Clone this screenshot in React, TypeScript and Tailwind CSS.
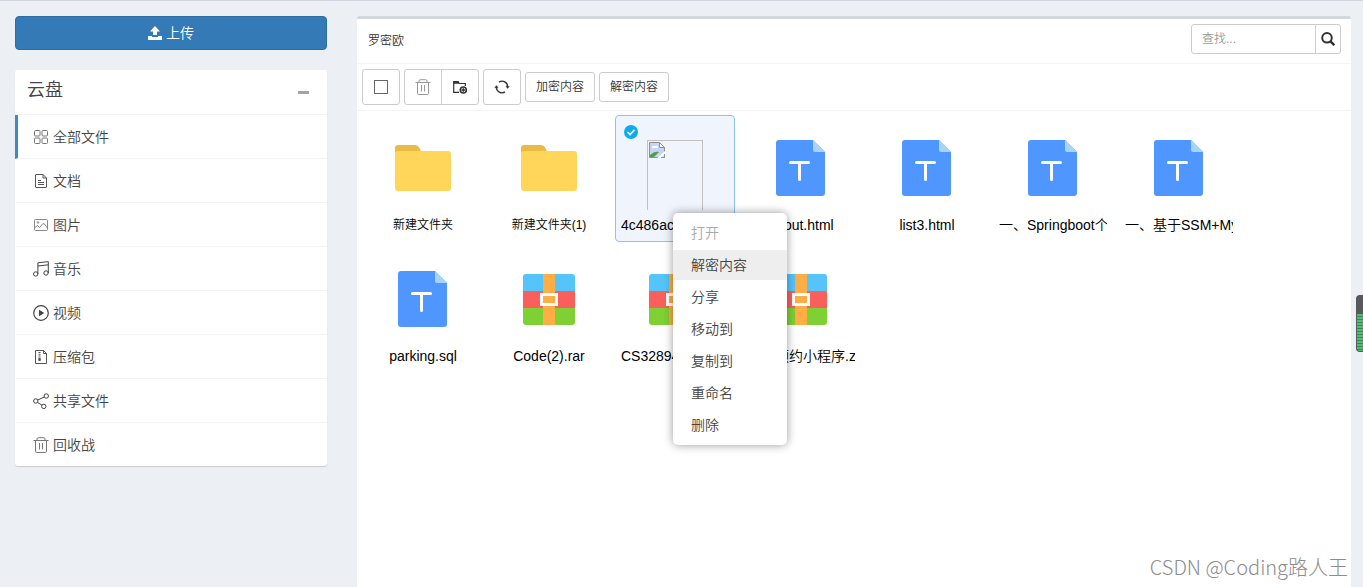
import type { ReactNode } from "react";
import clsx from "clsx";

type IconProps = { className?: string; children: ReactNode };

/** Thin outlined 16px icon base. */
function LineIcon({ className = "size-4", children }: IconProps) {
  return (
    <svg
      viewBox="0 0 16 16"
      className={className}
      fill="none"
      stroke="currentColor"
      strokeWidth="1"
      aria-hidden="true"
    >
      {children}
    </svg>
  );
}

function GridIcon() {
  return (
    <LineIcon className="size-4 text-[#777]">
      <rect x="1.5" y="1.5" width="5.5" height="5.5" rx="1" />
      <rect x="9" y="1.5" width="5.5" height="5.5" rx="1" />
      <rect x="1.5" y="9" width="5.5" height="5.5" rx="1" />
      <rect x="9" y="9" width="5.5" height="5.5" rx="1" />
    </LineIcon>
  );
}

function DocIcon() {
  return (
    <LineIcon className="size-4 text-[#555]">
      <path d="M3 1.5h7l3.500 3.500v9a.500.500 0 01-.500.500H3a.500.500 0 01-.500-.500V2a.500.500 0 01.500-.500zM10 1.5V5h3.500M5 7.5h3M5 9.5h6M5 11.5h6" />
    </LineIcon>
  );
}

function ImageIcon() {
  return (
    <LineIcon className="size-4 text-[#888]">
      <rect x="1.5" y="2.5" width="13" height="11" rx="1" />
      <circle cx="5" cy="5.5" r="0.8" />
      <path d="M2 10.5l2.5-2 2 2L10 6.5l2 1 2.5 4" />
    </LineIcon>
  );
}

function MusicIcon() {
  return (
    <LineIcon>
      <circle cx="2.7" cy="13" r="2.2" />
      <circle cx="13" cy="12" r="2.2" />
      <path d="M4.9 13V1.8L15.3.6V12M4.9 5l10.4-1.2" />
    </LineIcon>
  );
}

function VideoIcon() {
  return (
    <LineIcon>
      <circle cx="8" cy="8" r="7.3" strokeWidth="1.2" />
      <path d="M6 4.8v6.4L11.3 8z" fill="currentColor" stroke="none" />
    </LineIcon>
  );
}

function ZipIcon() {
  return (
    <LineIcon className="size-4 text-[#555]">
      <path d="M2.5 1.5h8l3 3v10h-11zM10.500 1.5v3h3" />
      <path d="M6.5 3v6" strokeWidth="2" strokeDasharray="1 0.8" />
      <path d="M5.8 9.500h1.500v2H5.800z" fill="currentColor" />
    </LineIcon>
  );
}

function ShareIcon() {
  return (
    <LineIcon>
      <circle cx="2.8" cy="8" r="2.2" />
      <circle cx="13.3" cy="3" r="2.2" />
      <circle cx="10.8" cy="13.4" r="2.2" />
      <path d="M4.8 7l6.5-3M4.5 9.4l4.5 2.800" />
    </LineIcon>
  );
}

function TrashIcon({ className = "size-4 text-[#777]" }: { className?: string }) {
  return (
    <LineIcon className={className}>
      <path d="M.5 3.5h15M4 3.5V2A1.3 1.3 0 015.3.7h5.4A1.3 1.3 0 0112 2v1.5M2.5 3.5v10.8a1.2 1.2 0 001.2 1.2h8.6a1.2 1.2 0 001.2-1.2V3.5M6.5 6v6.5M9.5 6v6.5" />
    </LineIcon>
  );
}

function FolderAddIcon() {
  return (
    <LineIcon className="size-4">
      <path d="M7 13.3H1.7V2.5H6l1.2 2h6.1V7" strokeWidth="1.2" />
      <path d="M1.5 2h4.7l1.3 2.8h-6z" fill="currentColor" stroke="none" />
      <circle cx="11.3" cy="11" r="3" strokeWidth="1.6" />
      <path d="M11.3 9.200v3.600M9.500 11h3.600" strokeWidth="1.4" />
    </LineIcon>
  );
}

function RefreshIcon() {
  return (
    <LineIcon className="size-4">
      <path d="M5 3.1A5.600 5.600 0 0113.600 8M11 12.900A5.600 5.600 0 012.400 8" strokeWidth="1.4" />
      <path d="M11.500 7.300h4.200l-2.100 2.500zM.300 8.700h4.200L2.400 6.200z" fill="currentColor" stroke="none" />
    </LineIcon>
  );
}

function FolderArt() {
  return (
    <svg viewBox="0 0 56 56" className="size-14" aria-hidden="true">
      <path d="M0 14V8a3 3 0 013-3h17c3 0 5 3 6.500 8v3H0z" fill="#e9bb45" />
      <rect y="11" width="56" height="40" rx="3" fill="#ffd65a" />
    </svg>
  );
}

function TextFileArt() {
  return (
    <svg viewBox="0 0 56 56" className="size-14" aria-hidden="true">
      <path d="M6 0h34l12 12v41a3 3 0 01-3 3H6a3 3 0 01-3-3V3a3 3 0 013-3z" fill="#4f97ff" />
      <path d="M40 0l12 12H42a2 2 0 01-2-2z" fill="#a8d3ff" />
      <path d="M17.500 22.500h18M26.500 22.500v17" stroke="#fff" strokeWidth="3" strokeLinecap="round" />
    </svg>
  );
}

function ArchiveArt() {
  return (
    <svg viewBox="0 0 56 56" className="size-14" aria-hidden="true">
      <path d="M2 20V6a3 3 0 013-3h46a3 3 0 013 3v14z" fill="#55c4fb" />
      <path d="M2 20h52v17H2z" fill="#fb5f5c" />
      <path d="M2 37h52v14a3 3 0 01-3 3H5a3 3 0 01-3-3z" fill="#7ed035" />
      <path d="M22 3h12v51H22z" fill="#ffae45" />
      <rect x="20.500" y="23.500" width="15" height="10" fill="#ffae45" stroke="#fff" strokeWidth="3" />
    </svg>
  );
}

/** Placeholder frame for a thumbnail that failed to load. */
function MissingArt() {
  return (
    <div className="h-20 w-14 border border-[#c0c0c0] p-px">
      <svg viewBox="0 0 16 16" className="size-4" aria-hidden="true">
        <path d="M.5.500h10l5 5v10H.500z" fill="#c6d5f5" stroke="#909090" />
        <path d="M3 6a2 2 0 013-2 2 2 0 013 2z" fill="#fff" />
        <path d="M1 15v-2c3-3 7-4 9-3l-5 5z" fill="#4fa043" />
        <path d="M10.500.500v5h5z" fill="#fff" stroke="#909090" />
        <path d="M8 16l8-7v3l-4 4z" fill="#fff" />
        <path d="M12 15.500h3.500V12" fill="none" stroke="#909090" />
      </svg>
    </div>
  );
}

const CATEGORIES = [
  { label: "全部文件", icon: <GridIcon />, active: true },
  { label: "文档", icon: <DocIcon /> },
  { label: "图片", icon: <ImageIcon /> },
  { label: "音乐", icon: <MusicIcon /> },
  { label: "视频", icon: <VideoIcon /> },
  { label: "压缩包", icon: <ZipIcon /> },
  { label: "共享文件", icon: <ShareIcon /> },
  { label: "回收战", icon: <TrashIcon /> },
];

type FileKind = "folder" | "text" | "archive" | "missing";
type FileEntry = { name: string; kind: FileKind; selected?: boolean };

const ART: Record<FileKind, ReactNode> = {
  folder: <FolderArt />,
  text: <TextFileArt />,
  archive: <ArchiveArt />,
  missing: <MissingArt />,
};

const FILES: FileEntry[] = [
  { name: "新建文件夹", kind: "folder" },
  { name: "新建文件夹(1)", kind: "folder" },
  { name: "4c486ac07b21e5.jpg", kind: "missing", selected: true },
  { name: "about.html", kind: "text" },
  { name: "list3.html", kind: "text" },
  { name: "一、Springboot个人.md", kind: "text" },
  { name: "一、基于SSM+Mysql.md", kind: "text" },
  { name: "parking.sql", kind: "text" },
  { name: "Code(2).rar", kind: "archive" },
  { name: "CS32894-code.zip", kind: "archive" },
  { name: "在线预约小程序.zip", kind: "archive" },
];

const MENU = [
  { label: "打开", disabled: true },
  { label: "解密内容", hovered: true },
  { label: "分享" },
  { label: "移动到" },
  { label: "复制到" },
  { label: "重命名" },
  { label: "删除" },
];

function Sidebar() {
  return (
    <aside className="w-[312px] shrink-0 pt-[15px]">
      <button
        type="button"
        className="flex h-[34px] w-full items-center justify-center gap-1 rounded border border-[#2e6da4] bg-[#337ab7] text-sm text-white"
      >
        <svg viewBox="0 0 14 14" className="size-3.5" fill="currentColor" aria-hidden="true">
          <path d="M7 0l5 5.500H9V9H5V5.500H2zM0 10h4v1h6v-1h4v4H0z" />
        </svg>
        上传
      </button>

      <section className="mt-5 rounded-[3px] bg-white shadow-[0_1px_1px_rgba(0,0,0,0.15)]">
        <header className="flex h-[45px] items-center justify-between border-b border-[#f4f4f4] pr-[18px] pl-3">
          <h3 className="pb-1 text-lg font-[350] text-[#444]">云盘</h3>
          <button type="button" aria-label="收起" className="flex h-5 items-center">
            <span className="h-[3px] w-[11px] bg-[#a0a5ab]" />
          </button>
        </header>
        <nav>
          {CATEGORIES.map(({ label, icon, active }) => (
            <a
              key={label}
              href="#"
              className={clsx(
                "flex h-11 items-center gap-1 border-b border-l-[3px] border-b-[#f4f4f4] pl-[15px] text-sm text-[#444] last:h-[43px] last:border-b-0",
                active ? "border-l-[#3c8dbc]" : "border-l-transparent",
              )}
            >
              {icon}
              {label}
            </a>
          ))}
        </nav>
      </section>
    </aside>
  );
}

const iconButton = "flex h-9 w-[38px] items-center justify-center border border-[#ccc] bg-white";
const textButton = "h-[30px] w-[70px] rounded-[3px] border border-[#ccc] bg-white text-xs";

function Toolbar() {
  return (
    <div className="flex h-[47px] items-center gap-1 border-b border-[#f4f4f4] px-[5px] text-[#333]">
      <button type="button" aria-label="全选" className={clsx(iconButton, "rounded-[3px]")}>
        <span className="size-3.5 border border-[#666]" />
      </button>
      <div className="flex">
        <button type="button" aria-label="删除" className={clsx(iconButton, "rounded-l-[3px]")}>
          <TrashIcon className="size-4 text-[#999]" />
        </button>
        <button
          type="button"
          aria-label="新建文件夹"
          className={clsx(iconButton, "-ml-px rounded-r-[3px]")}
        >
          <FolderAddIcon />
        </button>
      </div>
      <button type="button" aria-label="刷新" className={clsx(iconButton, "rounded-[3px]")}>
        <RefreshIcon />
      </button>
      <button type="button" className={textButton}>
        加密内容
      </button>
      <button type="button" className={textButton}>
        解密内容
      </button>
    </div>
  );
}

function FileTile({ name, kind, selected }: FileEntry) {
  return (
    <li
      className={clsx(
        "relative flex w-[120px] flex-col items-center rounded border px-[5px] pt-6 pb-1.5",
        selected ? "border-[#90c1ef] bg-[#f0f4fc]" : "border-transparent",
      )}
    >
      {selected && (
        <svg viewBox="0 0 14 14" className="absolute top-[9px] left-2 size-3.5" aria-hidden="true">
          <circle cx="7" cy="7" r="7" fill="#09aee8" />
          <path d="M3.500 7l2.600 2.500 4.400-4.800" fill="none" stroke="#fff" strokeWidth="1.700" />
        </svg>
      )}
      <div className="h-[70px] overflow-hidden">{ART[kind]}</div>
      <p
        className={clsx(
          "mt-[5px] w-full overflow-hidden text-center whitespace-nowrap text-black",
          kind === "folder" ? "text-xs leading-5" : "text-sm leading-5",
        )}
      >
        {name}
      </p>
    </li>
  );
}

function ContextMenu() {
  return (
    <ul
      role="menu"
      className="absolute top-[212px] left-[673px] flex w-[114px] flex-col gap-0.5 rounded-[5px] bg-white py-[5px] shadow-[0_0_10px_rgba(0,0,0,0.4)]"
    >
      {MENU.map(({ label, disabled, hovered }) => (
        <li key={label} role="none">
          <button
            type="button"
            role="menuitem"
            disabled={disabled}
            className={clsx(
              "block h-[30px] w-full pl-[18px] text-left text-sm",
              disabled ? "text-[#aaa]" : "text-[#444]",
              hovered && "bg-[#eee]",
            )}
          >
            {label}
          </button>
        </li>
      ))}
    </ul>
  );
}

export default function App() {
  return (
    <div className="relative flex min-h-screen gap-[30px] overflow-hidden border-t border-[#d2d6de] bg-[#ecf0f5] pr-3 pl-[15px] font-['Liberation_Sans','Noto_Sans_CJK_SC',sans-serif] font-[350]">
      <Sidebar />

      <main className="mt-[15px] min-w-0 flex-1 rounded-t-[3px] border-t-[3px] border-[#d2d6de] bg-white">
        <header className="flex h-[45px] items-center justify-between border-b border-[#f4f4f4] pr-2.5 pl-[11px]">
          <h1 className="text-xs font-[350] text-[#333]">罗密欧</h1>
          <form className="flex pb-1">
            <input
              type="text"
              aria-label="查找"
              placeholder="查找..."
              className="h-[30px] w-[125px] rounded-l-[3px] border border-[#ccc] px-2.5 text-xs placeholder:text-[#999]"
            />
            <button
              type="button"
              aria-label="搜索"
              className="-ml-px flex h-[30px] w-[26px] items-center justify-center rounded-r-[3px] border border-[#ccc] bg-white text-[#333]"
            >
              <svg
                viewBox="0 0 14 14"
                className="size-3.5"
                fill="none"
                stroke="currentColor"
                strokeWidth="2"
                aria-hidden="true"
              >
                <circle cx="6" cy="5.800" r="4.800" />
                <path d="M9.300 9.200l4 4" strokeWidth="2.500" />
              </svg>
            </button>
          </form>
        </header>
        <Toolbar />
        <ul className="flex flex-wrap gap-x-1.5 gap-y-1 pt-1 pl-1.5">
          {FILES.map((file) => (
            <FileTile key={file.name} {...file} />
          ))}
        </ul>
      </main>

      <ContextMenu />

      {/* level meter docked to the window edge */}
      <div className="absolute top-[294px] right-0 flex h-[57px] w-[7px] flex-col overflow-hidden rounded-l-[4px] border border-r-0 border-[#58595b] bg-[#58595b]">
        <div className="mt-[18px] flex-1 bg-[repeating-linear-gradient(#4fbd74_0_2px,#3d8557_2px_3px)]" />
      </div>

      <p className="absolute right-[15px] bottom-1 font-['Noto_Sans_CJK_SC',sans-serif] text-xl leading-8 font-light text-[#8c8c8c]">
        CSDN @Coding路人王
      </p>
    </div>
  );
}
